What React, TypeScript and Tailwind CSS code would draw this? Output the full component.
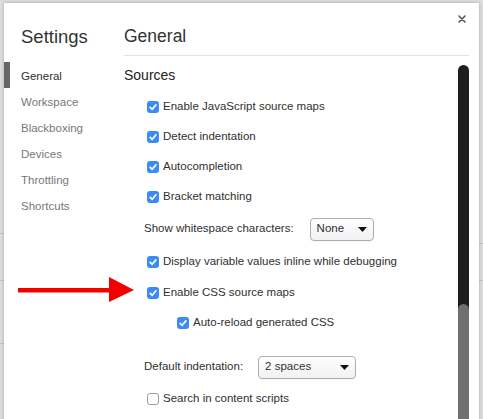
import React from "react";

const Check = ({ checked = true }: { checked?: boolean }) =>
  checked ? (
    <span className="w-[12px] h-[12px] rounded-[3px] bg-[#3a8bf6] flex items-center justify-center shrink-0">
      <svg width="12" height="12" viewBox="0 0 12 12">
        <path d="M3.2 6.3 L5.2 8.3 L8.9 3.9" fill="none" stroke="white" strokeWidth="1.7" strokeLinecap="round" strokeLinejoin="round" />
      </svg>
    </span>
  ) : (
    <span className="w-[12px] h-[12px] rounded-[3px] bg-white border border-[#9a9a9a] shrink-0" />
  );

const CheckRow = ({ label, checked = true, h = "h-[30px]", indent = "pl-[23px]" }: { label: string; checked?: boolean; h?: string; indent?: string }) => (
  <div className={`flex items-center gap-[4px] ${h} ${indent}`}>
    <Check checked={checked} />
    <span className="text-[11.5px] text-[#303030] leading-none">{label}</span>
  </div>
);

const Select = ({ value, w }: { value: string; w: string }) => (
  <div className={`${w} h-[23px] rounded-[4px] border border-[#adadad] bg-gradient-to-b from-white to-[#f1f1f1] flex items-center justify-between pl-[6px] pr-[6px] shadow-[0_1px_0_rgba(0,0,0,0.04)]`}>
    <span className="text-[11.5px] text-[#303030] leading-none">{value}</span>
    <svg width="9" height="5" viewBox="0 0 9 5">
      <path d="M0 0 L9 0 L4.5 5 Z" fill="#111" />
    </svg>
  </div>
);

export default function App() {
  const side = ["Workspace", "Blackboxing", "Devices", "Throttling", "Shortcuts"];
  return (
    <div className="w-[483px] h-[419px] overflow-hidden bg-[#dcdcdc] relative font-['Liberation_Sans',Arial,sans-serif] pl-[4px] pt-[3px]">
      {/* background hints */}
      <div className="absolute left-0 top-[233px] w-[4px] h-px bg-[#c4c4c4]" />
      <div className="absolute left-0 top-[280px] w-[4px] h-px bg-[#c4c4c4]" />
      <div className="absolute left-0 top-[343px] w-[4px] h-px bg-[#c4c4c4]" />
      <div className="absolute right-0 top-[243px] w-[4px] h-px bg-[#c4c4c4]" />
      <div className="absolute right-0 top-[280px] w-[4px] h-px bg-[#c4c4c4]" />

      <div className="relative w-[475px] h-[440px] bg-white shadow-[0_0_3px_rgba(0,0,0,0.25)] flex">
        {/* close */}
        <div className="absolute right-[12px] top-[11px] w-[10px] h-[10px]">
          <svg width="10" height="10" viewBox="0 0 10 10">
            <path d="M2 2 L8 8 M8 2 L2 8" stroke="#555" strokeWidth="1.6" strokeLinecap="round" />
          </svg>
        </div>

        {/* sidebar */}
        <div className="w-[120px] shrink-0 flex flex-col">
          <div className="h-[53px] pt-[16px] flex items-center pl-[17px]">
            <span className="text-[18.5px] text-[#333] leading-none">Settings</span>
          </div>
          <div className="mt-[6px] flex flex-col">
            <div className="h-[26px] pt-[3px] flex items-center border-l-[6px] border-[#666] pl-[11px] text-[11.5px] text-[#303030]">General</div>
            {side.map((s) => (
              <div key={s} className="h-[26px] pt-[3px] flex items-center pl-[17px] text-[11.5px] text-[#777]">
                {s}
              </div>
            ))}
          </div>
        </div>

        {/* main */}
        <div className="flex-1 flex flex-col pr-[10px]">
          <div className="h-[53px] pt-[16px] flex items-center border-b border-[#e3e3e3]">
            <span className="text-[17.5px] text-[#333] leading-none">General</span>
          </div>
          <div className="flex-1 flex">
            <div className="flex-1 flex flex-col">
              <div className="h-[24px] mt-[7px] flex items-center">
                <span className="text-[14px] text-[#222] leading-none">Sources</span>
              </div>
              <div className="mt-[5px]">
                <CheckRow label="Enable JavaScript source maps" />
                <CheckRow label="Detect indentation" />
                <CheckRow label="Autocompletion" />
                <CheckRow label="Bracket matching" />
              </div>
              <div className="h-[34px] flex items-center pl-[20px]">
                <span className="text-[11.5px] text-[#303030] leading-none">Show whitespace characters:</span>
                <div className="ml-[16px]">
                  <Select value="None" w="w-[64px]" />
                </div>
              </div>
              <CheckRow label="Display variable values inline while debugging" h="h-[32px]" />
              <CheckRow label="Enable CSS source maps" />
              <CheckRow label="Auto-reload generated CSS" indent="pl-[53px]" />
              <div className="h-[44px] mt-[7px] flex items-center pl-[20px]">
                <span className="text-[11.5px] text-[#303030] leading-none">Default indentation:</span>
                <div className="ml-[15px]">
                  <Select value="2 spaces" w="w-[98px]" />
                </div>
              </div>
              <CheckRow label="Search in content scripts" checked={false} h="h-[20px]" />
            </div>
            {/* scrollbar */}
            <div className="w-[11px] mt-[9px] rounded-t-full bg-[#1e1e1e] flex flex-col">
              <div className="mt-[239px] flex-1 rounded-t-full bg-[#6f6f6f]" />
            </div>
          </div>
        </div>
      </div>

      {/* red arrow */}
      <svg className="absolute left-0 top-0 pointer-events-none" width="483" height="419">
        <rect x="18" y="288" width="93" height="4.5" fill="#f20000" />
        <polygon points="109,277 134,290 109,302" fill="#f20000" />
      </svg>
    </div>
  );
}
